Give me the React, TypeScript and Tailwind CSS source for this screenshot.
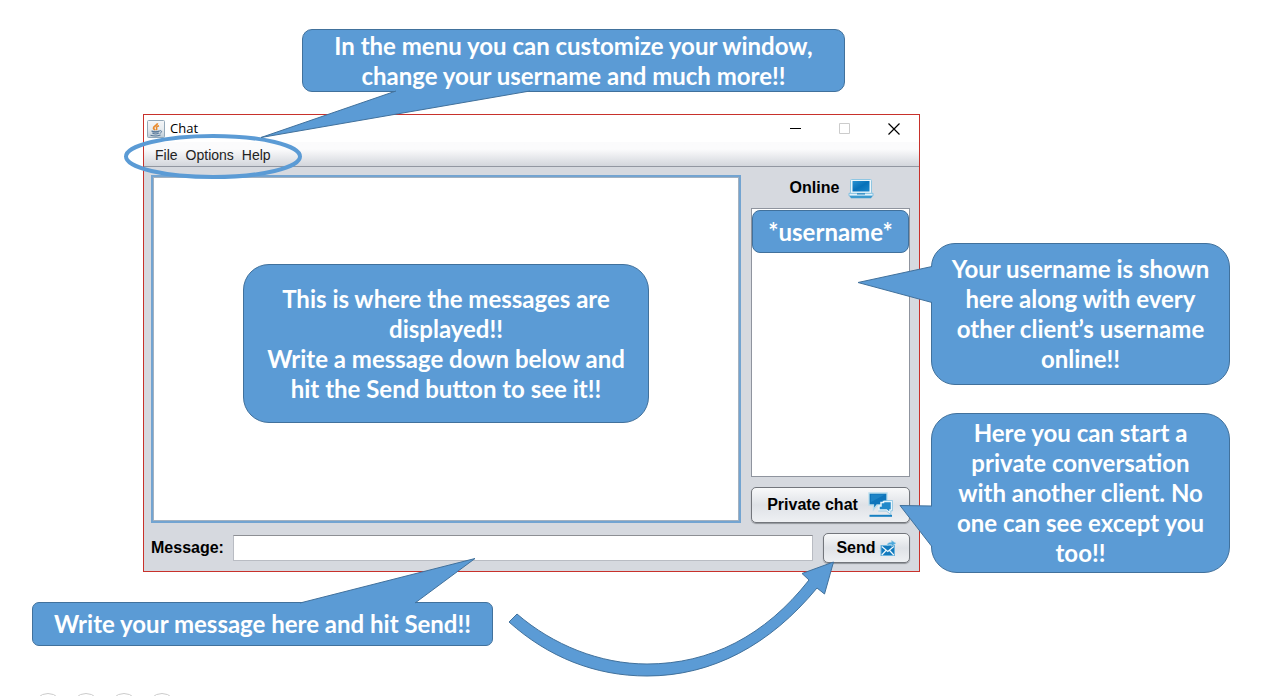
import React from "react";

type CalloutProps = {
  className: string;
  children: React.ReactNode;
};

function Callout({ className, children }: CalloutProps) {
  return (
    <div
      className={`absolute flex items-center justify-center border border-[#41719c] bg-[#5b9bd5] text-center font-[Lato,sans-serif] text-2xl leading-[30px] font-bold text-white ${className}`}
    >
      {children}
    </div>
  );
}

type TailProps = {
  className: string;
  width: number;
  height: number;
  points: string;
};

function Tail({ className, width, height, points }: TailProps) {
  return (
    <svg
      className={`pointer-events-none absolute ${className}`}
      width={width}
      height={height}
      viewBox={`0 0 ${width} ${height}`}
      aria-hidden="true"
    >
      <polyline points={points} fill="#5b9bd5" stroke="#41719c" />
    </svg>
  );
}

function JavaIcon() {
  return (
    <svg width="18" height="18" viewBox="0 0 18 18" fill="none" aria-hidden="true">
      <defs>
        <linearGradient id="javaTile" x1="0" y1="0" x2="0" y2="1">
          <stop offset="0" stopColor="#f4f6f8" />
          <stop offset="0.5" stopColor="#e8ecef" />
          <stop offset="1" stopColor="#bccbd6" />
        </linearGradient>
      </defs>
      <rect x="0.5" y="0.5" width="17" height="17" rx="1" fill="url(#javaTile)" stroke="#94a8b8" />
      <path d="M10.500 3.200C10.500 5.500 6 6 6.500 8.200c.2.900 1.300 1.200 1.600 2" stroke="#e8892b" strokeWidth="1.700" />
      <path d="M12 5.800c-2 .6-3 1.400-2.400 2.300.5.700.2 1.300-.4 1.900" stroke="#e8892b" strokeWidth="1.500" />
      <path d="M4.500 10.800h8l-.8 2.700H5.700z" fill="#9fb2c4" />
      <path d="M4.500 11c1.800.8 6 .8 8 0M5.500 13.300c1.600.7 4.500.7 6.200 0M3.500 15.300c3 .9 7.500.8 10-.2" stroke="#58789a" strokeWidth="1.100" />
      <path d="M12.500 10.800c2.800-.8 2.700 1.900.2 2.500" stroke="#58789a" />
    </svg>
  );
}

function LaptopIcon() {
  return (
    <svg width="26" height="20" viewBox="0 0 26 20" aria-hidden="true">
      <defs>
        <linearGradient id="screen" x1="0" y1="0" x2="1" y2="1">
          <stop offset="0" stopColor="#2a93d2" />
          <stop offset="0.5" stopColor="#0871b9" />
          <stop offset="1" stopColor="#1b87cb" />
        </linearGradient>
      </defs>
      <rect x="2.500" y="0.500" width="21" height="14" rx="1" fill="#eef7fb" stroke="#8fc6e2" />
      <rect x="4.500" y="2" width="17" height="10.500" fill="url(#screen)" />
      <path d="M1 14.300h24v2.500H1z" fill="#e3f2fa" stroke="#6db7de" strokeWidth="0.800" />
      <path d="M9 14.300h8v1.200H9z" fill="#1c80bd" />
      <path d="M1.500 17h23l-1.500 2.200H3z" fill="#3b9ace" />
    </svg>
  );
}

function PrivateChatIcon() {
  return (
    <svg width="26" height="26" viewBox="0 0 26 26" aria-hidden="true">
      <path d="M1 1h18v12H9l-3.500 4.500V13H1z" fill="#0f75bb" stroke="#b9dded" strokeWidth="1.300" />
      <path d="M3 2.500h14L3 10z" fill="#2e93d1" opacity="0.500" />
      <path d="M13 10.500h2.500v-1h8V18H22v3l-3.500-3H11v-4h2z" fill="#2389ca" stroke="#e8f5fb" strokeWidth="1.500" />
      <path d="M16 8.500h8.500v10.300h-1.700v3.700L18.300 19h-8" fill="none" stroke="#7bbde0" strokeWidth="0.700" />
      <path d="M1.500 23.800h22.500" stroke="#1680c2" strokeWidth="2" />
    </svg>
  );
}

function SendIcon() {
  return (
    <svg width="17" height="17" viewBox="0 0 17 17" fill="none" aria-hidden="true">
      <rect x="1" y="5.500" width="13.500" height="10" fill="#1279bd" stroke="#6bb2db" />
      <path d="M1.800 6.500l6 5 6-5M1.800 15l4.200-4.500M13.800 15l-4.200-4.500" stroke="#f1f9fd" strokeWidth="1.200" />
      <path d="M7 5.500c.2-2.300 2-3.300 4.500-3.300V.500L16 3.300l-4.500 3V4.500C9.500 4.300 8.500 4.800 7 5.500z" fill="#4ba7db" stroke="#a7d4ea" strokeWidth="0.600" />
    </svg>
  );
}

const buttonStyle =
  "flex items-center justify-center rounded-[5px] border border-[#73767c] bg-linear-to-b from-[#f8f9fa] via-[#dfe2e7] to-[#eef0f3] font-bold text-black shadow-[0_1px_1px_#92959b]";

function ChatWindow() {
  return (
    <section className="border border-[#c8312b] bg-[#d6d9df] font-['Liberation_Sans',Arial,sans-serif] text-base text-black">
      <header className="flex h-[27px] items-center bg-white pl-[3px]">
        <JavaIcon />
        <h1 className="ml-[5px] flex-1 font-['Open_Sans',sans-serif] text-[13px]">Chat</h1>
        <div className="flex h-full">
          <button type="button" aria-label="Minimize" className="flex w-[49px] items-center justify-center">
            <svg width="12" height="12" viewBox="0 0 12 12"><path d="M1 5.500h11" stroke="#000" /></svg>
          </button>
          <button type="button" aria-label="Maximize" disabled className="flex w-[49px] items-center justify-center">
            <svg width="12" height="12" viewBox="0 0 12 12"><path d="M1.500.500h10v10h-10z" fill="none" stroke="#ccc" /></svg>
          </button>
          <button type="button" aria-label="Close" className="flex w-[51px] items-center justify-center">
            <svg width="12" height="12" viewBox="0 0 12 12"><path d="M.5.500l11 11M11.500.500l-11 11" stroke="#000" strokeWidth="1.200" /></svg>
          </button>
        </div>
      </header>
      <nav className="flex h-[25px] items-center gap-2 border-b border-[#9297a1] bg-linear-to-b from-[#fbfbfc] from-30% to-[#d3d6dc] pt-px pl-[11px] text-sm text-[#222]">
        <button type="button">File</button>
        <button type="button">Options</button>
        <button type="button">Help</button>
      </nav>
      <div className="flex gap-[10px] pt-2 pr-[9px] pl-[7px]">
        <textarea
          aria-label="Messages"
          readOnly
          className="min-w-0 flex-1 resize-none border-2 border-[#73a4d1] bg-white shadow-[inset_0_0_0_1px_#a3b1c0] outline-none"
        />
        <aside className="flex w-[159px] flex-col">
          <div className="flex h-[33px] items-start justify-center gap-[9px] pl-[3px]">
            <h2 className="pt-px font-bold">Online</h2>
            <div className="pt-1"><LaptopIcon /></div>
          </div>
          <div className="h-[269px] border border-[#8f949e] bg-white py-px">
            <div className="flex h-[43px] items-center justify-center rounded-lg border border-[#41719c] bg-[#5b9bd5] font-[Lato,sans-serif] text-2xl font-bold text-white">
              *username*
            </div>
          </div>
          <button type="button" className={`mt-[10px] h-[36px] gap-[10px] ${buttonStyle}`}>
            Private chat
            <PrivateChatIcon />
          </button>
        </aside>
      </div>
      <form className="flex items-center pt-[10px] pr-[9px] pb-2 pl-[7px]" onSubmit={(e) => e.preventDefault()}>
        <label htmlFor="message" className="w-[82px] font-bold">Message:</label>
        <input
          id="message"
          type="text"
          className="h-[26px] min-w-0 flex-1 border border-[#b9bcc3] border-t-[#8d8f94] bg-white px-2 outline-none"
        />
        <button type="submit" className={`ml-[10px] h-[30px] w-[87px] gap-1 ${buttonStyle}`}>
          Send
          <SendIcon />
        </button>
      </form>
    </section>
  );
}

export default function App() {
  return (
    <main className="relative flex h-screen flex-col overflow-hidden bg-white">
      <div className="pt-[114px] pr-[350px] pl-[143px]">
        <ChatWindow />
      </div>

      <svg className="pointer-events-none absolute top-[132px] left-[122px]" width="182" height="50" viewBox="0 0 182 50" aria-hidden="true">
        <ellipse cx="91" cy="24.500" rx="87" ry="20.500" fill="none" stroke="#5b9bd5" strokeWidth="4" />
      </svg>

      <Callout className="top-[29px] left-[302px] h-[63px] w-[543px] rounded-[10px]">
        <p>
          In the menu you can customize your window,
          <br />
          change your username and much more!!
        </p>
      </Callout>
      <Tail className="top-[90px] left-[258px]" width={276} height={52} points="138,1 3,47.5 272,1" />

      <Callout className="top-[264px] left-[243px] h-[159px] w-[406px] rounded-[26px]">
        <p>
          This is where the messages are
          <br />
          displayed!!
          <br />
          Write a message down below and
          <br />
          hit the Send button to see it!!
        </p>
      </Callout>

      <Callout className="top-[243px] right-[40px] h-[142px] w-[299px] rounded-[24px]">
        <p>
          Your username is shown
          <br />
          here along with every
          <br />
          other client’s username
          <br />
          online!!
        </p>
      </Callout>
      <Tail className="top-[262px] right-[337px]" width={76} height={44} points="75,4.500 1,20.500 75,40.500" />

      <Callout className="top-[413px] right-[40px] h-[160px] w-[299px] rounded-[26px]">
        <p>
          Here you can start a
          <br />
          private conversation
          <br />
          with another client. No
          <br />
          one can see except you
          <br />
          too!!
        </p>
      </Callout>
      <Tail className="top-[502px] right-[337px]" width={36} height={48} points="35,4 3,3.500 34,43.500 35,45" />

      <Callout className="top-[602px] left-[32px] h-[44px] w-[461px] rounded-[7px]">
        <p>Write your message here and hit Send!!</p>
      </Callout>
      <Tail className="top-[556px] left-[298px]" width={180} height={48} points="2,47 177,2.500 117,47" />

      <svg className="pointer-events-none absolute top-[560px] right-[430px]" width="340" height="120" viewBox="70 0 340 120" aria-hidden="true">
        <path
          d="M87 54C123 85 170 104 217 104C280 104 335 76 379 20L372 13.500L403.500 2L394.500 34L387 28C340 85 282 116 217 116C165 116 118 97 79 62Z"
          fill="#5b9bd5"
          stroke="#41719c"
        />
      </svg>

      <footer className="mt-[121px] flex shrink-0 gap-2 pl-[33px]">
        <button type="button" aria-label="Previous" className="size-[30px] shrink-0 rounded-full border border-[#ccc]" />
        <button type="button" aria-label="Next" className="size-[30px] shrink-0 rounded-full border border-[#ccc]" />
        <button type="button" aria-label="Pen" className="size-[30px] shrink-0 rounded-full border border-[#ccc]" />
        <button type="button" aria-label="All slides" className="size-[30px] shrink-0 rounded-full border border-[#ccc]" />
      </footer>
    </main>
  );
}
